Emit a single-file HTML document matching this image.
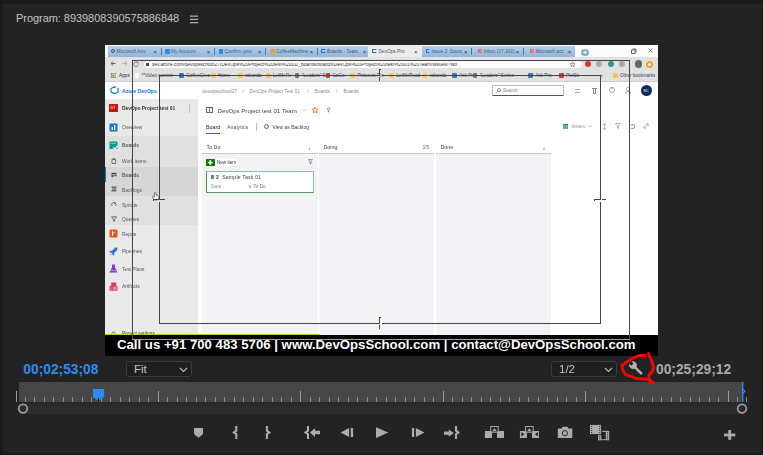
<!DOCTYPE html>
<html><head><meta charset="utf-8">
<style>
*{margin:0;padding:0;box-sizing:border-box}
html,body{width:763px;height:455px;overflow:hidden;background:#1a1a1a}
body{position:relative;font-family:"Liberation Sans",sans-serif}
.a{position:absolute}
.t{white-space:nowrap;line-height:1}
#panel{left:3px;top:4px;width:758px;height:449px;background:#232323}
.ttl{left:16px;top:12px;font-size:11px;letter-spacing:-0.05px;color:#c4c4c4;white-space:nowrap}
.tc{font-size:13.8px;font-weight:bold;white-space:nowrap;line-height:1}
.dd{border:1px solid #3b3b3b;background:#1f1f1f;border-radius:3px;color:#c8c8c8;font-size:12px}
#vid{left:105px;top:45px;width:553px;height:311px;background:#fff;overflow:hidden}
</style></head><body>
<div id="panel" class="a"></div>
<div class="a ttl">Program: 8939808390575886848</div>
<svg class="a" style="left:190px;top:14.5px" width="9" height="9"><rect x="0" y="0.6" width="8.2" height="1.1" fill="#c0c0c0"/><rect x="0" y="3.8" width="8.2" height="1.1" fill="#c0c0c0"/><rect x="0" y="7.1" width="8.2" height="1.1" fill="#c0c0c0"/></svg>
<div id="vid" class="a">
<div class="a" style="left:0;top:0;width:553px;height:311px;filter:blur(0.25px)"><div class="a" style="left:0.00px;top:0.00px;width:553.00px;height:11.50px;background:#fbfbfb"></div>
<div class="a" style="left:2.60px;top:0.60px;width:467.10px;height:11.00px;background:linear-gradient(#b4d0ee,#92b5dc)"></div>
<div class="a" style="left:55.90px;top:3.00px;width:0.70px;height:6.50px;background:#60748a"></div>
<div class="a t" style="left:11.60px;top:4.80px;font-size:4.8px;color:#4a5868">Microsoft Azu</div>
<div class="a t" style="left:48.50px;top:4.40px;font-size:6px;color:#333">×</div>
<div class="a" style="left:5.60px;top:3.60px;width:4.80px;height:4.80px;border-radius:50%;border:1.2px solid #555"></div>
<div class="a" style="left:109.20px;top:3.00px;width:0.70px;height:6.50px;background:#60748a"></div>
<div class="a t" style="left:66.00px;top:4.80px;font-size:4.8px;color:#4a5868">My Account</div>
<div class="a t" style="left:101.80px;top:4.40px;font-size:6px;color:#333">×</div>
<div class="a" style="left:60.00px;top:3.60px;width:4.80px;height:5.00px;border-radius:1px;background:#2a8ae0"></div>
<div class="a" style="left:160.40px;top:3.00px;width:0.70px;height:6.50px;background:#60748a"></div>
<div class="a t" style="left:119.60px;top:4.80px;font-size:4.8px;color:#4a5868">Confirm your</div>
<div class="a t" style="left:153.00px;top:4.40px;font-size:6px;color:#333">×</div>
<div class="a" style="left:113.60px;top:3.60px;width:4.80px;height:5.00px;border-radius:1px;background:#2a8ae0"></div>
<div class="a" style="left:211.90px;top:3.00px;width:0.70px;height:6.50px;background:#60748a"></div>
<div class="a t" style="left:171.00px;top:4.80px;font-size:4.8px;color:#4a5868">CoffeeMachine</div>
<div class="a t" style="left:204.50px;top:4.40px;font-size:6px;color:#333">×</div>
<div class="a" style="left:165.00px;top:3.60px;width:4.80px;height:5.00px;border-radius:1px;background:#e8a030"></div>
<div class="a t" style="left:222.00px;top:4.80px;font-size:4.8px;color:#4a5868">Boards - Team</div>
<div class="a t" style="left:257.70px;top:4.40px;font-size:6px;color:#333">×</div>
<div class="a" style="left:216.00px;top:3.80px;width:4.60px;height:4.60px;border-radius:1px;border:1.3px solid #1a73c8;border-right-color:transparent"></div>
<div class="a" style="left:263.40px;top:0.30px;width:53.60px;height:11.70px;background:#ececec;border-radius:1.5px 1.5px 0 0"></div>
<div class="a t" style="left:273.40px;top:4.80px;font-size:4.8px;color:#4a5868">DevOps Pro</div>
<div class="a t" style="left:309.00px;top:4.40px;font-size:6px;color:#333">×</div>
<div class="a" style="left:267.40px;top:3.80px;width:4.60px;height:4.60px;border-radius:1px;border:1.3px solid #1a73c8;border-right-color:transparent"></div>
<div class="a" style="left:366.30px;top:3.00px;width:0.70px;height:6.50px;background:#60748a"></div>
<div class="a t" style="left:326.60px;top:4.80px;font-size:4.8px;color:#4a5868">Issue 2: Sourc</div>
<div class="a t" style="left:358.90px;top:4.40px;font-size:6px;color:#333">×</div>
<div class="a" style="left:320.60px;top:3.80px;width:4.60px;height:4.60px;border-radius:1px;border:1.3px solid #1a73c8;border-right-color:transparent"></div>
<div class="a" style="left:418.20px;top:3.00px;width:0.70px;height:6.50px;background:#60748a"></div>
<div class="a t" style="left:378.60px;top:4.80px;font-size:4.8px;color:#4a5868">Inbox (17,102)</div>
<div class="a t" style="left:410.80px;top:4.40px;font-size:6px;color:#333">×</div>
<div class="a" style="left:372.60px;top:4.20px;width:5.00px;height:4.00px;background:#fff;border:0.6px solid #ccc"></div>
<div class="a t" style="left:373.00px;top:3.80px;font-size:5px;color:#d33;font-weight:bold">M</div>
<div class="a t" style="left:430.50px;top:4.80px;font-size:4.8px;color:#4a5868">Microsoft acc</div>
<div class="a t" style="left:462.70px;top:4.40px;font-size:6px;color:#333">×</div>
<div class="a" style="left:424.50px;top:4.20px;width:5.00px;height:4.00px;background:#fff;border:0.6px solid #ccc"></div>
<div class="a t" style="left:424.90px;top:3.80px;font-size:5px;color:#d33;font-weight:bold">M</div>
<div class="a" style="left:476.00px;top:3.50px;width:8.00px;height:7.50px;border-radius:50%;background:#8aa6c8"></div>
<div class="a t" style="left:478.00px;top:3.70px;font-size:7px;color:#fff;font-weight:bold">+</div>
<svg class="a" style="left:525.50px;top:2.50px" width="6" height="6" viewBox="0 0 6 6"><path d="M1.5 1 H5 V4.5" fill="none" stroke="#444" stroke-width="0.8"/><rect x="0.6" y="2" width="3.4" height="3.4" fill="none" stroke="#444" stroke-width="0.8"/></svg>
<svg class="a" style="left:542.50px;top:2.80px" width="5" height="5" viewBox="0 0 5 5"><path d="M0.6 0.6 L4.4 4.4 M4.4 0.6 L0.6 4.4" stroke="#444" stroke-width="0.8"/></svg>
<div class="a" style="left:0.00px;top:11.50px;width:553.00px;height:24.50px;background:#e1e1e1"></div>
<div class="a" style="left:0.00px;top:36.00px;width:553.00px;height:0.80px;background:#cfcfcf"></div>
<svg class="a" style="left:5.30px;top:15.80px" width="6" height="5" viewBox="0 0 6 5"><path d="M5.5 2.5 H1 M3 0.6 L1 2.5 L3 4.4" fill="none" stroke="#555" stroke-width="0.9"/></svg>
<svg class="a" style="left:16.50px;top:15.80px" width="6" height="5" viewBox="0 0 6 5"><path d="M0.5 2.5 H5 M3 0.6 L5 2.5 L3 4.4" fill="none" stroke="#aaa" stroke-width="0.9"/></svg>
<svg class="a" style="left:28.00px;top:16.00px" width="6" height="6" viewBox="0 0 6 6"><path d="M5 2.2 A2.3 2.3 0 1 0 5.2 3.6" fill="none" stroke="#666" stroke-width="0.8"/><path d="M3.6 1.2 L5.4 1 L5.3 2.8 Z" fill="#666"/></svg>
<div class="a" style="left:38.80px;top:15.60px;width:438.20px;height:7.90px;background:#fff;border-radius:4px"></div>
<div class="a" style="left:41.00px;top:17.80px;width:2.60px;height:3.20px;background:#444"></div>
<div class="a t" style="left:46.50px;top:17.70px;font-size:4.9px;color:#333;width:305px;overflow:hidden">dev.azure.com/devopsschool27/DevOps%20Project%20test%2001/_boards/board/t/DevOps%20Project%20test%2001%20Team/Issues/?workitem=2&amp;view=board</div>
<svg class="a" style="left:464.40px;top:15.70px" width="7.2" height="7.2" viewBox="0 0 7.2 7.2"><polygon points="3.60,1.00 4.29,2.65 6.07,2.80 4.71,3.96 5.13,5.70 3.60,4.77 2.07,5.70 2.49,3.96 1.13,2.80 2.91,2.65" fill="none" stroke="#666" stroke-width="0.7" stroke-linejoin="round"/></svg>
<div class="a" style="left:480.00px;top:16.00px;width:6.00px;height:6.00px;border-radius:50%;background:#d33"></div>
<div class="a" style="left:491.00px;top:16.00px;width:6.00px;height:6.00px;border-radius:50%;background:#aaa"></div>
<div class="a" style="left:502.70px;top:16.00px;width:6.00px;height:6.00px;border-radius:50%;background:#2a9a8a"></div>
<div class="a" style="left:513.80px;top:16.00px;width:6.00px;height:6.00px;border-radius:50%;background:#aaa"></div>
<div class="a" style="left:529.50px;top:15.00px;width:7.50px;height:7.50px;border-radius:50%;background:#6b6258"></div>
<div class="a" style="left:541.00px;top:15.50px;width:7.00px;height:7.00px;border-radius:50%;border:2px solid #f0a020;background:#fff"></div>
<svg class="a" style="left:5.70px;top:27.90px" width="5" height="5" viewBox="0 0 5 5"><g><rect x="0" y="0" width="1.4" height="1.4" fill="#e44"/><rect x="1.8" y="0" width="1.4" height="1.4" fill="#fb3"/><rect x="3.6" y="0" width="1.4" height="1.4" fill="#3a3"/><rect x="0" y="1.8" width="1.4" height="1.4" fill="#48f"/><rect x="1.8" y="1.8" width="1.4" height="1.4" fill="#e44"/><rect x="3.6" y="1.8" width="1.4" height="1.4" fill="#fb3"/><rect x="0" y="3.6" width="1.4" height="1.4" fill="#3a3"/><rect x="1.8" y="3.6" width="1.4" height="1.4" fill="#48f"/><rect x="3.6" y="3.6" width="1.4" height="1.4" fill="#e44"/></g></svg>
<div class="a t" style="left:14.00px;top:29.00px;font-size:4.8px;color:#333">Apps</div>
<div class="a" style="left:29.50px;top:27.80px;width:4.80px;height:4.80px;background:#fff;border-radius:1px"></div>
<div class="a t" style="left:36.50px;top:28.80px;font-size:4.6px;color:#3a4258">**Video summit</div>
<div class="a" style="left:74.30px;top:27.80px;width:4.80px;height:4.80px;background:#3a6fd8;border-radius:1px"></div>
<div class="a t" style="left:81.30px;top:28.80px;font-size:4.6px;color:#3a4258">CoffeeCrea</div>
<div class="a" style="left:106.00px;top:27.80px;width:4.80px;height:4.80px;background:#f2c84b;border-radius:1px"></div>
<div class="a t" style="left:113.00px;top:28.80px;font-size:4.6px;color:#3a4258">Home</div>
<div class="a" style="left:133.00px;top:27.80px;width:4.80px;height:4.80px;background:#f2c84b;border-radius:1px"></div>
<div class="a t" style="left:140.00px;top:28.80px;font-size:4.6px;color:#3a4258">rakanda</div>
<div class="a" style="left:160.90px;top:27.80px;width:4.80px;height:4.80px;background:#f2c84b;border-radius:1px"></div>
<div class="a t" style="left:167.90px;top:28.80px;font-size:4.6px;color:#3a4258">LetMeRe</div>
<div class="a" style="left:189.70px;top:27.80px;width:4.80px;height:4.80px;background:#777;border-radius:1px"></div>
<div class="a t" style="left:196.70px;top:28.80px;font-size:4.6px;color:#3a4258">"Leaders" S</div>
<div class="a" style="left:220.50px;top:27.80px;width:4.80px;height:4.80px;background:#d33;border-radius:1px"></div>
<div class="a t" style="left:227.50px;top:28.80px;font-size:4.6px;color:#3a4258">CoGo</div>
<div class="a" style="left:245.40px;top:27.80px;width:4.80px;height:4.80px;background:#f2c84b;border-radius:1px"></div>
<div class="a t" style="left:252.40px;top:28.80px;font-size:4.6px;color:#3a4258">Pinterest Pin</div>
<div class="a" style="left:284.30px;top:27.80px;width:4.80px;height:4.80px;background:#f2c84b;border-radius:1px"></div>
<div class="a t" style="left:291.30px;top:28.80px;font-size:4.6px;color:#3a4258">LetMeRead</div>
<div class="a" style="left:317.70px;top:27.80px;width:4.80px;height:4.80px;background:#f2c84b;border-radius:1px"></div>
<div class="a t" style="left:324.70px;top:28.80px;font-size:4.6px;color:#3a4258">rakanda</div>
<div class="a" style="left:347.30px;top:27.80px;width:4.80px;height:4.80px;background:#3a6fd8;border-radius:1px"></div>
<div class="a t" style="left:354.30px;top:28.80px;font-size:4.6px;color:#3a4258">Ask Pro</div>
<div class="a" style="left:367.70px;top:27.80px;width:4.80px;height:4.80px;background:#777;border-radius:1px"></div>
<div class="a t" style="left:374.70px;top:28.80px;font-size:4.6px;color:#3a4258">"Leaders" Series</div>
<div class="a" style="left:423.40px;top:27.80px;width:4.80px;height:4.80px;background:#3a6fd8;border-radius:1px"></div>
<div class="a t" style="left:430.40px;top:28.80px;font-size:4.6px;color:#3a4258">Ask Pro</div>
<div class="a" style="left:454.00px;top:27.80px;width:4.80px;height:4.80px;background:#d33;border-radius:1px"></div>
<div class="a t" style="left:461.00px;top:28.80px;font-size:4.6px;color:#3a4258">PixlSit</div>
<div class="a" style="left:508.00px;top:27.80px;width:4.80px;height:4.80px;background:#f2c84b;border-radius:1px"></div>
<div class="a t" style="left:515.00px;top:28.80px;font-size:4.6px;color:#3a4258">Other bookmarks</div>
<div class="a t" style="left:495.00px;top:28.20px;font-size:5px;color:#555">»</div>
<div class="a" style="left:0.00px;top:36.80px;width:553.00px;height:17.00px;background:#fff"></div>
<div class="a" style="left:0.00px;top:53.80px;width:553.00px;height:0.50px;background:#e6e6e6"></div>
<svg class="a" style="left:4.50px;top:41.20px" width="9" height="8" viewBox="0 0 9 8"><path d="M1 2.5 V6 L3 7.2 M1 2.5 L5 0.8 V2.2 M8 1.8 V6.2 L5 7.5 L2.2 6.6" fill="none" stroke="#0a78d0" stroke-width="1.2"/></svg>
<div class="a t" style="left:17.00px;top:43.60px;font-size:5.1px;color:#0a78d0;font-weight:bold">Azure DevOps</div>
<div class="a t" style="left:97.30px;top:44.60px;font-size:4.8px;color:#8a8a8a">devopsschool27</div>
<div class="a t" style="left:137.50px;top:44.60px;font-size:4.8px;color:#8a8a8a">/</div>
<div class="a t" style="left:144.50px;top:44.60px;font-size:4.8px;color:#8a8a8a">DevOps Project Test 01</div>
<div class="a t" style="left:202.60px;top:44.60px;font-size:4.8px;color:#8a8a8a">/</div>
<div class="a t" style="left:209.60px;top:44.60px;font-size:4.8px;color:#8a8a8a">Boards</div>
<div class="a t" style="left:231.00px;top:44.60px;font-size:4.8px;color:#8a8a8a">/</div>
<div class="a t" style="left:238.50px;top:44.60px;font-size:4.8px;color:#8a8a8a">Boards</div>
<div class="a" style="left:387.40px;top:40.40px;width:71.60px;height:10.30px;background:#fff;border:0.6px solid #bbb;border-bottom:0.9px solid #555;border-radius:1px"></div>
<svg class="a" style="left:391.00px;top:43.00px" width="5" height="5" viewBox="0 0 5 5"><circle cx="3" cy="2" r="1.5" fill="none" stroke="#666" stroke-width="0.7"/><path d="M1.9 3.1 L0.5 4.5" stroke="#666" stroke-width="0.8"/></svg>
<div class="a t" style="left:398.00px;top:43.90px;font-size:4.6px;color:#888">Search</div>
<div class="a" style="left:469.50px;top:44.00px;width:5.50px;height:3.50px;border-top:0.8px solid #aaa;border-bottom:0.8px solid #aaa"></div>
<div class="a" style="left:486.80px;top:42.60px;width:5.40px;height:0.80px;background:#888"></div>
<div class="a" style="left:487.60px;top:43.40px;width:3.80px;height:5.60px;border:0.7px solid #888;border-top:none"></div>
<div class="a" style="left:504.00px;top:42.30px;width:6.00px;height:6.00px;border:0.7px solid #aaa;border-radius:50%"></div>
<div class="a t" style="left:505.80px;top:43.40px;font-size:4.5px;color:#999">?</div>
<div class="a" style="left:521.30px;top:42.20px;width:3.40px;height:3.40px;border:0.7px solid #aaa;border-radius:50%"></div>
<div class="a" style="left:520.00px;top:46.00px;width:6.00px;height:3.00px;border:0.7px solid #aaa;border-radius:3px 3px 0 0;border-bottom:none"></div>
<div class="a" style="left:536.00px;top:40.00px;width:11.00px;height:11.00px;border-radius:50%;background:#102a5c"></div>
<div class="a t" style="left:538.20px;top:44.40px;font-size:4px;color:#fff">SC</div>
<div class="a" style="left:0.00px;top:54.30px;width:93.30px;height:236.70px;background:#e9e9e9"></div>
<div class="a" style="left:92.80px;top:54.30px;width:0.80px;height:236.70px;background:#dcdcdc"></div>
<div class="a" style="left:0.00px;top:90.90px;width:93.30px;height:89.00px;background:#e0e0e0"></div>
<div class="a" style="left:0.00px;top:122.40px;width:93.30px;height:28.40px;background:#d6d6d6"></div>
<div class="a" style="left:0.00px;top:122.40px;width:1.30px;height:14.20px;background:#0078d4"></div>
<div class="a" style="left:4.00px;top:59.00px;width:9.00px;height:8.30px;background:#c21a12"></div>
<div class="a t" style="left:5.50px;top:62.20px;font-size:3.6px;color:#fff">DT</div>
<div class="a t" style="left:17.00px;top:61.90px;font-size:4.9px;color:#333;font-weight:bold">DevOps Project test 01</div>
<div class="a" style="left:84.30px;top:58.50px;width:0.60px;height:9.50px;background:#c0c0c0"></div>
<svg class="a" style="left:4px;top:77.5px" width="9" height="9"><rect x="0.5" y="0.5" width="8" height="8" rx="0.8" fill="#1e73c8"/><rect x="5" y="2" width="1.3" height="5" fill="#fff"/><rect x="2.6" y="4" width="1.3" height="3" fill="#fff"/></svg>
<div class="a t" style="left:17.00px;top:81.20px;font-size:4.9px;color:#555;">Overview</div>
<svg class="a" style="left:4px;top:95.5px" width="9" height="9"><rect x="0.5" y="0.5" width="8" height="7.5" rx="0.8" fill="#009a8a"/><path d="M4.2 6.5 L5.8 8 L8.6 5" stroke="#fff" stroke-width="1.1" fill="none"/><rect x="1.5" y="1.8" width="5.5" height="1" fill="#7cd6c8"/></svg>
<div class="a t" style="left:17.00px;top:99.20px;font-size:4.9px;color:#555;font-weight:bold;">Boards</div>
<svg class="a" style="left:5.799999999999997px;top:112.9px" width="6" height="6"><path d="M1 1.2 H4.6 V5.6 H1 Z" fill="none" stroke="#555" stroke-width="0.8"/><rect x="1.8" y="0.3" width="2" height="1.2" fill="#555"/></svg>
<div class="a t" style="left:17.00px;top:115.00px;font-size:4.9px;color:#555;">Work items</div>
<svg class="a" style="left:5.799999999999997px;top:127.1px" width="6" height="6"><rect x="0.4" y="0.8" width="5.2" height="1.5" fill="#444"/><rect x="0.4" y="2.8" width="2.2" height="2.4" fill="#555"/><rect x="3.4" y="2.8" width="2.2" height="1.6" fill="#555"/></svg>
<div class="a t" style="left:17.00px;top:129.20px;font-size:4.9px;color:#555;font-weight:bold;">Boards</div>
<svg class="a" style="left:5.799999999999997px;top:141.4px" width="6" height="6"><rect x="0.5" y="0.6" width="5" height="1.1" fill="#444"/><rect x="1.2" y="2.4" width="3.8" height="1.1" fill="#555"/><rect x="0.5" y="4.2" width="5" height="1.1" fill="#444"/></svg>
<div class="a t" style="left:17.00px;top:143.50px;font-size:4.9px;color:#555;">Backlogs</div>
<svg class="a" style="left:5.799999999999997px;top:156.4px" width="6" height="6"><path d="M1 4.8 A2.2 2.2 0 1 1 4.8 4.8" fill="none" stroke="#555" stroke-width="0.8"/><path d="M2.9 3 L4.4 1.6" stroke="#555" stroke-width="0.8"/></svg>
<div class="a t" style="left:17.00px;top:158.50px;font-size:4.9px;color:#555;">Sprints</div>
<svg class="a" style="left:5.799999999999997px;top:170.5px" width="6" height="6"><path d="M0.5 0.8 H5.5 L3.6 3.2 V5.4 L2.4 4.8 V3.2 Z" fill="none" stroke="#555" stroke-width="0.8"/></svg>
<div class="a t" style="left:17.00px;top:172.60px;font-size:4.9px;color:#555;">Queries</div>
<svg class="a" style="left:4px;top:184.2px" width="9" height="9"><rect x="0.5" y="0.5" width="8" height="8" rx="1.2" fill="#e8541a"/><path d="M3.5 2 V7 M3.5 4.8 L5.8 3" stroke="#fff" stroke-width="0.9" fill="none"/></svg>
<div class="a t" style="left:17.00px;top:187.90px;font-size:4.9px;color:#555;">Repos</div>
<svg class="a" style="left:4px;top:201.5px" width="9" height="9"><path d="M8.6 0.4 L6 0.8 L2.8 4 L1 3.6 L0.4 5.2 L2.2 5.6 L3.4 6.8 L3.8 8.6 L5.4 8 L5 6.2 L8.2 3 Z" fill="#2a6fd6"/><path d="M0.4 8.6 L2.2 6.4 L2.8 7 Z" fill="#2a6fd6"/></svg>
<div class="a t" style="left:17.00px;top:205.20px;font-size:4.9px;color:#555;">Pipelines</div>
<svg class="a" style="left:4px;top:219.3px" width="9" height="9"><path d="M3 0.5 H6 V3.2 L8.5 8.5 H0.5 L3 3.2 Z" fill="#8a3ac8"/><path d="M2 6.6 H7" stroke="#c9a0f0" stroke-width="0.8"/></svg>
<div class="a t" style="left:17.00px;top:223.00px;font-size:4.9px;color:#555;">Test Plans</div>
<svg class="a" style="left:4px;top:236.5px" width="9" height="9"><rect x="2.2" y="0.5" width="5" height="4" fill="#d0346a"/><rect x="0.5" y="3.8" width="8" height="5" fill="#e0507e"/><rect x="4.5" y="5" width="3" height="2.6" fill="#f08aa8"/></svg>
<div class="a t" style="left:17.00px;top:240.20px;font-size:4.9px;color:#555;">Artifacts</div>
<svg class="a" style="left:5.50px;top:286.00px" width="5" height="5" viewBox="0 0 5 5"><circle cx="2.5" cy="2.5" r="1.6" fill="none" stroke="#666" stroke-width="0.9"/></svg>
<div class="a t" style="left:17.00px;top:287.20px;font-size:4.8px;color:#444">Project settings</div>
<div class="a t" style="left:82.00px;top:285.70px;font-size:6px;color:#777">«</div>
<div class="a" style="left:93.30px;top:54.30px;width:459.70px;height:236.70px;background:#fff"></div>
<div class="a" style="left:101.00px;top:62.30px;width:7.00px;height:5.50px;border:0.8px solid #666;border-top:1.6px solid #666;background:linear-gradient(90deg,#fff 45%,#666 45% 55%,#fff 55%)"></div>
<div class="a t" style="left:112.60px;top:62.70px;font-size:6.1px;color:#444">DevOps Project test 01 Team</div>
<svg class="a" style="left:196.50px;top:64.00px" width="4" height="3" viewBox="0 0 4 3"><path d="M0.5 0.5 L2 2 L3.5 0.5" fill="none" stroke="#999" stroke-width="0.6"/></svg>
<svg class="a" style="left:205.80px;top:60.80px" width="8.4" height="8.4" viewBox="0 0 8.4 8.4"><polygon points="4.20,1.00 5.05,3.04 7.24,3.21 5.57,4.64 6.08,6.79 4.20,5.64 2.32,6.79 2.83,4.64 1.16,3.21 3.35,3.04" fill="none" stroke="#e8741a" stroke-width="0.9" stroke-linejoin="round"/></svg>
<svg class="a" style="left:220.50px;top:62.00px" width="5" height="6" viewBox="0 0 5 6"><circle cx="2.5" cy="1.8" r="1.2" fill="none" stroke="#777" stroke-width="0.7"/><path d="M2.5 3 V5.5 M1.5 4.3 H3.5" stroke="#777" stroke-width="0.6"/></svg>
<div class="a t" style="left:101.00px;top:79.60px;font-size:5.3px;color:#222">Board</div>
<div class="a" style="left:101.00px;top:87.60px;width:14.00px;height:1.00px;background:#0078d4"></div>
<div class="a t" style="left:122.00px;top:79.60px;font-size:5.3px;color:#555">Analytics</div>
<div class="a" style="left:151.00px;top:77.50px;width:0.60px;height:8.00px;background:#bbb"></div>
<div class="a" style="left:158.80px;top:78.80px;width:4.80px;height:4.80px;border:0.9px solid #2a6fd6;border-radius:50%"></div>
<div class="a t" style="left:167.40px;top:79.60px;font-size:5px;color:#444">View as Backlog</div>
<div class="a" style="left:457.70px;top:78.50px;width:5.30px;height:5.00px;background:#6ab07a;border-top:1.5px solid #3a8a4a"></div>
<div class="a t" style="left:466.50px;top:79.80px;font-size:4.8px;color:#999">Issues</div>
<svg class="a" style="left:482.50px;top:80.00px" width="4" height="3" viewBox="0 0 4 3"><path d="M0.5 0.5 L2 2 L3.5 0.5" fill="none" stroke="#888" stroke-width="0.6"/></svg>
<svg class="a" style="left:497.00px;top:77.50px" width="5" height="7" viewBox="0 0 5 7"><path d="M2.5 0.5 V6.5 M1 2 L2.5 0.5 L4 2 M1 5 L2.5 6.5 L4 5" fill="none" stroke="#6a9ade" stroke-width="0.65"/></svg>
<svg class="a" style="left:510.00px;top:78.00px" width="6" height="6" viewBox="0 0 6 6"><path d="M0.5 0.5 H5.5 L3.5 3 V5.5 L2.5 5 V3 Z" fill="none" stroke="#6a9ade" stroke-width="0.65"/></svg>
<div class="a" style="left:525.00px;top:78.50px;width:5.00px;height:5.00px;border:0.7px solid #6a9ade;border-radius:50%;border-left-color:transparent"></div>
<svg class="a" style="left:537.50px;top:78.00px" width="6" height="6" viewBox="0 0 6 6"><path d="M0.8 5.2 L5.2 0.8 M3 0.8 H5.2 V3 M0.8 3 V5.2 H3" fill="none" stroke="#6a9ade" stroke-width="0.65"/></svg>
<div class="a" style="left:97.00px;top:108.20px;width:115.60px;height:182.80px;background:#f3f3f6"></div>
<div class="a" style="left:97.00px;top:107.60px;width:115.60px;height:1.00px;background:#c8c8c8"></div>
<div class="a t" style="left:101.50px;top:100.00px;font-size:5.3px;color:#444">To Do</div>
<div class="a" style="left:214.00px;top:108.20px;width:115.30px;height:182.80px;background:#f3f3f6"></div>
<div class="a" style="left:214.00px;top:107.60px;width:115.30px;height:1.00px;background:#c8c8c8"></div>
<div class="a t" style="left:218.50px;top:100.00px;font-size:5.3px;color:#444">Doing</div>
<div class="a" style="left:331.00px;top:108.20px;width:114.60px;height:182.80px;background:#f3f3f6"></div>
<div class="a" style="left:331.00px;top:107.60px;width:114.60px;height:1.00px;background:#c8c8c8"></div>
<div class="a t" style="left:335.50px;top:100.00px;font-size:5.3px;color:#444">Done</div>
<div class="a t" style="left:203.50px;top:100.40px;font-size:6px;color:#666">‹</div>
<div class="a t" style="left:438.00px;top:100.40px;font-size:6px;color:#666">‹</div>
<div class="a t" style="left:317.50px;top:101.00px;font-size:4.8px;color:#4a8a4a">0/5</div>
<div class="a" style="left:101.00px;top:113.50px;width:31.00px;height:7.10px;background:#fff"></div>
<div class="a" style="left:101.00px;top:113.50px;width:8.60px;height:7.10px;background:#107c10"></div>
<svg class="a" style="left:101px;top:113.5px" width="8.6" height="7.1"><rect x="3.6" y="1.2" width="1.4" height="4.7" fill="#fff"/><rect x="2" y="2.85" width="4.6" height="1.4" fill="#fff"/></svg>
<div class="a t" style="left:112.00px;top:115.70px;font-size:4.6px;color:#333">New item</div>
<svg class="a" style="left:202.50px;top:113.50px" width="5" height="6" viewBox="0 0 5 6"><path d="M0.5 0.5 H4.5 L3 2.5 V5 L2 4.5 V2.5 Z" fill="none" stroke="#666" stroke-width="0.6"/></svg>
<div class="a" style="left:101.00px;top:126.00px;width:108.00px;height:22.30px;background:#fff;border:0.7px solid #8ac09a;border-left:1.2px solid #3a9a4a;border-bottom:1px solid #5a9a6a"></div>
<div class="a" style="left:106.00px;top:129.50px;width:3.00px;height:4.70px;background:#4a9a6a"></div>
<div class="a t" style="left:111.00px;top:130.20px;font-size:5.2px;color:#444;letter-spacing:0.15px"><b>2</b>&nbsp; Sample Task 01</div>
<div class="a t" style="left:105.50px;top:140.20px;font-size:4.6px;color:#999">State</div>
<div class="a" style="left:143.80px;top:140.40px;width:2.40px;height:2.40px;background:#aaa;border-radius:50%"></div>
<div class="a t" style="left:148.50px;top:140.20px;font-size:4.6px;color:#777">To Do</div>
<div class="a" style="left:0.00px;top:288.50px;width:215.40px;height:1.50px;background:#a6d22a"></div>
<div class="a" style="left:0.00px;top:290.00px;width:553.00px;height:21.00px;background:#000"></div>
<div class="a t" style="left:12.00px;top:292.80px;font-size:13.2px;color:#fff;font-weight:bold">Call us +91 700 483 5706 | www.DevOpsSchool.com | contact@DevOpsSchool.com</div>
<svg class="a" style="left:46.5px;top:146.5px" width="8" height="9" viewBox="0 0 8 9"><path d="M2.6 0.8 Q3.4 0.3 3.9 0.9 L4.1 3.2 Q5.2 2.9 6.2 3.6 Q7.2 4.3 6.9 6 Q6.6 7.6 5 7.9 L3 7.9 Q1.8 7.5 1.2 6.3 L0.7 4.6 Q1 4.1 1.8 4.6 L2.4 5.2 Z" fill="#fff" stroke="#333" stroke-width="0.6"/></svg></div><div class="a" style="left:27.00px;top:15.00px;width:498.00px;height:1.00px;background:#454545"></div>
<div class="a" style="left:27.00px;top:15.00px;width:1.00px;height:279.00px;background:#454545"></div>
<div class="a" style="left:524.00px;top:15.00px;width:1.00px;height:280.00px;background:#454545"></div>
<div class="a" style="left:27.00px;top:294.00px;width:498.00px;height:1.00px;background:#a0a0a0"></div>
<div class="a" style="left:54.00px;top:30.00px;width:221.00px;height:1.00px;background:#454545"></div>
<div class="a" style="left:277.00px;top:30.00px;width:219.00px;height:1.00px;background:#454545"></div>
<div class="a" style="left:54.00px;top:278.00px;width:221.00px;height:1.00px;background:#454545"></div>
<div class="a" style="left:277.00px;top:278.00px;width:219.00px;height:1.00px;background:#454545"></div>
<div class="a" style="left:54.00px;top:30.00px;width:1.00px;height:125.00px;background:#454545"></div>
<div class="a" style="left:54.00px;top:157.00px;width:1.00px;height:122.00px;background:#454545"></div>
<div class="a" style="left:495.00px;top:30.00px;width:1.00px;height:125.00px;background:#454545"></div>
<div class="a" style="left:495.00px;top:157.00px;width:1.00px;height:122.00px;background:#454545"></div>
<div class="a" style="left:274.00px;top:24.00px;width:1.00px;height:7.00px;background:#454545"></div>
<div class="a" style="left:274.00px;top:32.00px;width:1.00px;height:4.00px;background:#454545"></div>
<div class="a" style="left:274.00px;top:24.00px;width:2.00px;height:1.00px;background:#454545"></div>
<div class="a" style="left:274.00px;top:272.00px;width:1.00px;height:7.00px;background:#454545"></div>
<div class="a" style="left:274.00px;top:280.00px;width:1.00px;height:4.00px;background:#454545"></div>
<div class="a" style="left:274.00px;top:272.00px;width:2.00px;height:1.00px;background:#454545"></div>
<div class="a" style="left:48.00px;top:154.00px;width:6.00px;height:1.00px;background:#454545"></div>
<div class="a" style="left:55.00px;top:154.00px;width:5.00px;height:1.00px;background:#454545"></div>
<div class="a" style="left:48.00px;top:154.00px;width:1.00px;height:2.00px;background:#454545"></div>
<div class="a" style="left:489.00px;top:154.00px;width:6.00px;height:1.00px;background:#454545"></div>
<div class="a" style="left:497.00px;top:154.00px;width:4.00px;height:1.00px;background:#454545"></div>
<div class="a" style="left:489.00px;top:154.00px;width:1.00px;height:2.00px;background:#454545"></div>
</div>
<div class="a tc" style="left:23.3px;top:363px;color:#2d8cf0">00;02;53;08</div>
<div class="a tc" style="left:656px;top:362.6px;color:#a9a9a9">00;25;29;12</div>
<div class="a dd" style="left:126px;top:360.5px;width:66px;height:16px"><span class="a" style="left:7px;top:1.5px;font-size:11.5px;color:#c4c4c4">Fit</span><svg class="a" style="left:52px;top:5px" width="9" height="6"><path d="M1 1 L4.5 4.5 L8 1" stroke="#bbb" stroke-width="1.1" fill="none"/></svg></div>
<div class="a dd" style="left:551px;top:360.5px;width:66px;height:16px"><span class="a" style="left:7px;top:1.5px;font-size:11.5px;color:#c4c4c4">1/2</span><svg class="a" style="left:52px;top:5px" width="9" height="6"><path d="M1 1 L4.5 4.5 L8 1" stroke="#bbb" stroke-width="1.1" fill="none"/></svg></div>
<div class="a" style="left:19px;top:382px;width:724px;height:19.5px;background:#474747"></div>
<div class="a" style="left:19px;top:402.5px;width:724px;height:11.5px;background:#2b2b2b"></div>
<svg class="a" style="left:0;top:0" width="763" height="455"><rect x="16" y="391" width="1" height="11" fill="#9c9c9c"/><rect x="25" y="397" width="1" height="5" fill="#8c8c8c"/><rect x="34" y="397" width="1" height="5" fill="#8c8c8c"/><rect x="44" y="397" width="1" height="5" fill="#8c8c8c"/><rect x="53" y="397" width="1" height="5" fill="#8c8c8c"/><rect x="63" y="397" width="1" height="5" fill="#8c8c8c"/><rect x="72" y="397" width="1" height="5" fill="#8c8c8c"/><rect x="82" y="397" width="1" height="5" fill="#8c8c8c"/><rect x="91" y="397" width="1" height="5" fill="#8c8c8c"/><rect x="101" y="397" width="1" height="5" fill="#8c8c8c"/><rect x="110" y="397" width="1" height="5" fill="#8c8c8c"/><rect x="120" y="397" width="1" height="5" fill="#8c8c8c"/><rect x="129" y="397" width="1" height="5" fill="#8c8c8c"/><rect x="139" y="397" width="1" height="5" fill="#8c8c8c"/><rect x="148" y="397" width="1" height="5" fill="#8c8c8c"/><rect x="158" y="391" width="1" height="11" fill="#9c9c9c"/><rect x="167" y="397" width="1" height="5" fill="#8c8c8c"/><rect x="177" y="397" width="1" height="5" fill="#8c8c8c"/><rect x="186" y="397" width="1" height="5" fill="#8c8c8c"/><rect x="196" y="397" width="1" height="5" fill="#8c8c8c"/><rect x="205" y="397" width="1" height="5" fill="#8c8c8c"/><rect x="215" y="397" width="1" height="5" fill="#8c8c8c"/><rect x="224" y="397" width="1" height="5" fill="#8c8c8c"/><rect x="234" y="397" width="1" height="5" fill="#8c8c8c"/><rect x="243" y="397" width="1" height="5" fill="#8c8c8c"/><rect x="253" y="397" width="1" height="5" fill="#8c8c8c"/><rect x="262" y="397" width="1" height="5" fill="#8c8c8c"/><rect x="272" y="397" width="1" height="5" fill="#8c8c8c"/><rect x="281" y="397" width="1" height="5" fill="#8c8c8c"/><rect x="291" y="397" width="1" height="5" fill="#8c8c8c"/><rect x="300" y="391" width="1" height="11" fill="#9c9c9c"/><rect x="310" y="397" width="1" height="5" fill="#8c8c8c"/><rect x="319" y="397" width="1" height="5" fill="#8c8c8c"/><rect x="329" y="397" width="1" height="5" fill="#8c8c8c"/><rect x="338" y="397" width="1" height="5" fill="#8c8c8c"/><rect x="348" y="397" width="1" height="5" fill="#8c8c8c"/><rect x="357" y="397" width="1" height="5" fill="#8c8c8c"/><rect x="367" y="397" width="1" height="5" fill="#8c8c8c"/><rect x="376" y="397" width="1" height="5" fill="#8c8c8c"/><rect x="386" y="397" width="1" height="5" fill="#8c8c8c"/><rect x="395" y="397" width="1" height="5" fill="#8c8c8c"/><rect x="405" y="397" width="1" height="5" fill="#8c8c8c"/><rect x="414" y="397" width="1" height="5" fill="#8c8c8c"/><rect x="424" y="397" width="1" height="5" fill="#8c8c8c"/><rect x="433" y="397" width="1" height="5" fill="#8c8c8c"/><rect x="443" y="391" width="1" height="11" fill="#9c9c9c"/><rect x="452" y="397" width="1" height="5" fill="#8c8c8c"/><rect x="462" y="397" width="1" height="5" fill="#8c8c8c"/><rect x="471" y="397" width="1" height="5" fill="#8c8c8c"/><rect x="481" y="397" width="1" height="5" fill="#8c8c8c"/><rect x="490" y="397" width="1" height="5" fill="#8c8c8c"/><rect x="500" y="397" width="1" height="5" fill="#8c8c8c"/><rect x="509" y="397" width="1" height="5" fill="#8c8c8c"/><rect x="519" y="397" width="1" height="5" fill="#8c8c8c"/><rect x="528" y="397" width="1" height="5" fill="#8c8c8c"/><rect x="538" y="397" width="1" height="5" fill="#8c8c8c"/><rect x="547" y="397" width="1" height="5" fill="#8c8c8c"/><rect x="557" y="397" width="1" height="5" fill="#8c8c8c"/><rect x="566" y="397" width="1" height="5" fill="#8c8c8c"/><rect x="576" y="397" width="1" height="5" fill="#8c8c8c"/><rect x="585" y="391" width="1" height="11" fill="#9c9c9c"/><rect x="595" y="397" width="1" height="5" fill="#8c8c8c"/><rect x="604" y="397" width="1" height="5" fill="#8c8c8c"/><rect x="614" y="397" width="1" height="5" fill="#8c8c8c"/><rect x="623" y="397" width="1" height="5" fill="#8c8c8c"/><rect x="633" y="397" width="1" height="5" fill="#8c8c8c"/><rect x="642" y="397" width="1" height="5" fill="#8c8c8c"/><rect x="652" y="397" width="1" height="5" fill="#8c8c8c"/><rect x="661" y="397" width="1" height="5" fill="#8c8c8c"/><rect x="671" y="397" width="1" height="5" fill="#8c8c8c"/><rect x="680" y="397" width="1" height="5" fill="#8c8c8c"/><rect x="690" y="397" width="1" height="5" fill="#8c8c8c"/><rect x="699" y="397" width="1" height="5" fill="#8c8c8c"/><rect x="709" y="397" width="1" height="5" fill="#8c8c8c"/><rect x="718" y="397" width="1" height="5" fill="#8c8c8c"/><rect x="728" y="391" width="1" height="11" fill="#9c9c9c"/><rect x="737" y="397" width="1" height="5" fill="#8c8c8c"/><rect x="746" y="397" width="1" height="5" fill="#8c8c8c"/>
<path d="M194 428 H203 V434 L198.5 437.8 L194 434 Z" fill="#acacac"/>
<path d="M236.3 426 V430.6 L233.9 432.4 L236.3 434.2 V439" stroke="#acacac" stroke-width="2.1" fill="none"/>
<path d="M266.9 426 V430.6 L269.3 432.4 L266.9 434.2 V439" stroke="#acacac" stroke-width="2.1" fill="none"/>
<path d="M308 426 V430.6 L305.6 432.4 L308 434.2 V439" stroke="#acacac" stroke-width="2.1" fill="none"/>
<path d="M309.8 432.4 L315 428.3 V430.8 H320 V434.2 H315 V436.9 Z" fill="#acacac"/>
<path d="M340.5 432.5 L349.1 427.9 V437.1 Z M350.7 427.9 H353.1 V437.1 H350.7 Z" fill="#acacac"/>
<path d="M376 427.2 L388.3 432.6 L376 438.1 Z" fill="#acacac"/>
<path d="M411.9 428.1 H414.2 V437 H411.9 Z M415.9 428.1 L424.4 432.55 L415.9 437 Z" fill="#acacac"/>
<path d="M453.9 433.1 L448.8 429.4 V431.5 H444 V434.7 H448.8 V436.8 Z" fill="#acacac"/>
<path d="M456 426 V430.6 L458.4 432.4 L456 434.2 V439" stroke="#acacac" stroke-width="2.1" fill="none"/>
<g fill="#acacac">
<path d="M490.2 426 H498.7 V432.8 H490.2 Z M491.2 427 V431.8 H497.7 V427 Z" fill-rule="evenodd"/>
<path d="M492.1 431.2 L494.45 428.2 L496.8 431.2 Z"/>
<path d="M484.9 430.9 H491.2 V432.8 H492 V438.1 H484.9 Z"/>
<path d="M497.7 430.9 H504 V438.1 H497 V432.8 H497.7 Z"/>
<path d="M525.1 426 H533.7 V432.8 H525.1 Z M526.1 427 V431.8 H532.7 V427 Z" fill-rule="evenodd"/>
<path d="M527 431.2 L529.4 428.2 L531.8 431.2 Z"/>
<path d="M519.9 430.9 H526.1 V432.8 H526.9 V438.1 H519.9 Z M521.4 432 V436.6 L524.3 434.3 Z" fill-rule="evenodd"/>
<path d="M532.7 430.9 H539 V438.1 H532 V432.8 H532.7 Z M537.9 432 V436.6 L535 434.3 Z" fill-rule="evenodd"/>
<path d="M557.8 428.5 H561.9 L562.6 426.8 H567.6 L568.3 428.5 H572.3 V438 H557.8 Z"/>
<path d="M590 424.9 H601.1 V434.1 H590 Z"/>
<rect x="602.1" y="430.9" width="7.1" height="1.1"/><rect x="605.8" y="430.9" width="3.4" height="9.3"/><rect x="598.1" y="439.2" width="11.1" height="1"/><rect x="598.1" y="435.1" width="3.2" height="5.1"/>
<rect x="724" y="433.6" width="11.3" height="2.8"/>
<rect x="728.3" y="430" width="2.8" height="9.8"/>
</g>
<circle cx="564.9" cy="433.2" r="2.6" fill="none" stroke="#262626" stroke-width="1"/>
<g fill="#2a2a2a">
<rect x="591.1" y="425.9" width="1" height="1"/><rect x="591.1" y="428" width="1" height="1"/><rect x="591.1" y="430" width="1" height="1"/><rect x="591.1" y="432.1" width="1" height="1"/>
<rect x="599.2" y="425.9" width="1" height="1"/><rect x="599.2" y="428" width="1" height="1"/><rect x="599.2" y="430" width="1" height="1"/><rect x="599.2" y="432.1" width="1" height="1"/>
<rect x="599.2" y="436.2" width="1" height="1"/><rect x="599.2" y="438.3" width="1" height="1"/>
<rect x="607.1" y="432.3" width="1" height="1"/><rect x="607.1" y="434.4" width="1" height="1"/><rect x="607.1" y="436.4" width="1" height="1"/><rect x="607.1" y="438.2" width="1" height="1"/>
</g>
<path d="M92.9 388.9 H104.2 V397.1 L98.5 401 L92.9 397.1 Z" fill="#2d8cf0"/>
<rect x="98" y="398" width="1.1" height="3.2" fill="#111"/>
<rect x="742" y="382" width="1.4" height="19.8" fill="#2d8cf0"/>
<path d="M743 389 L745 391.3 L743 393.6" stroke="#2d8cf0" stroke-width="1.1" fill="none"/>
<circle cx="23" cy="408.6" r="4.3" fill="none" stroke="#9c9c9c" stroke-width="1.8"/>
<circle cx="742" cy="408.6" r="4.3" fill="none" stroke="#9c9c9c" stroke-width="1.8"/>
<g transform="rotate(-45 633 365.2)"><circle cx="633" cy="365.2" r="3.7" fill="#b4b4b4"/><rect x="631.4" y="360" width="3.2" height="4.4" rx="0.5" fill="#232323"/><rect x="631.8" y="365.2" width="2.4" height="12.8" rx="1.2" fill="#b4b4b4"/></g>
<path d="M645.3 355.3 L638.7 355.7 L632.6 358.3 L626.4 362.3 L622 365.4 L622.9 370.2 L625.5 374.6 L630.8 376.4 L637 378.6 L643.1 379 L648.4 379.4 L653.7 383" stroke="#ff0000" stroke-width="2.9" fill="none" stroke-linejoin="round" stroke-linecap="round"/>
<path d="M648.4 353.5 L651.9 361.4 L653.7 367.6 L651.9 372 L648.8 375.5 L649.3 379.9 L651 382.5" stroke="#ff0000" stroke-width="2.9" fill="none" stroke-linejoin="round" stroke-linecap="round"/>
</svg>
</body></html>
